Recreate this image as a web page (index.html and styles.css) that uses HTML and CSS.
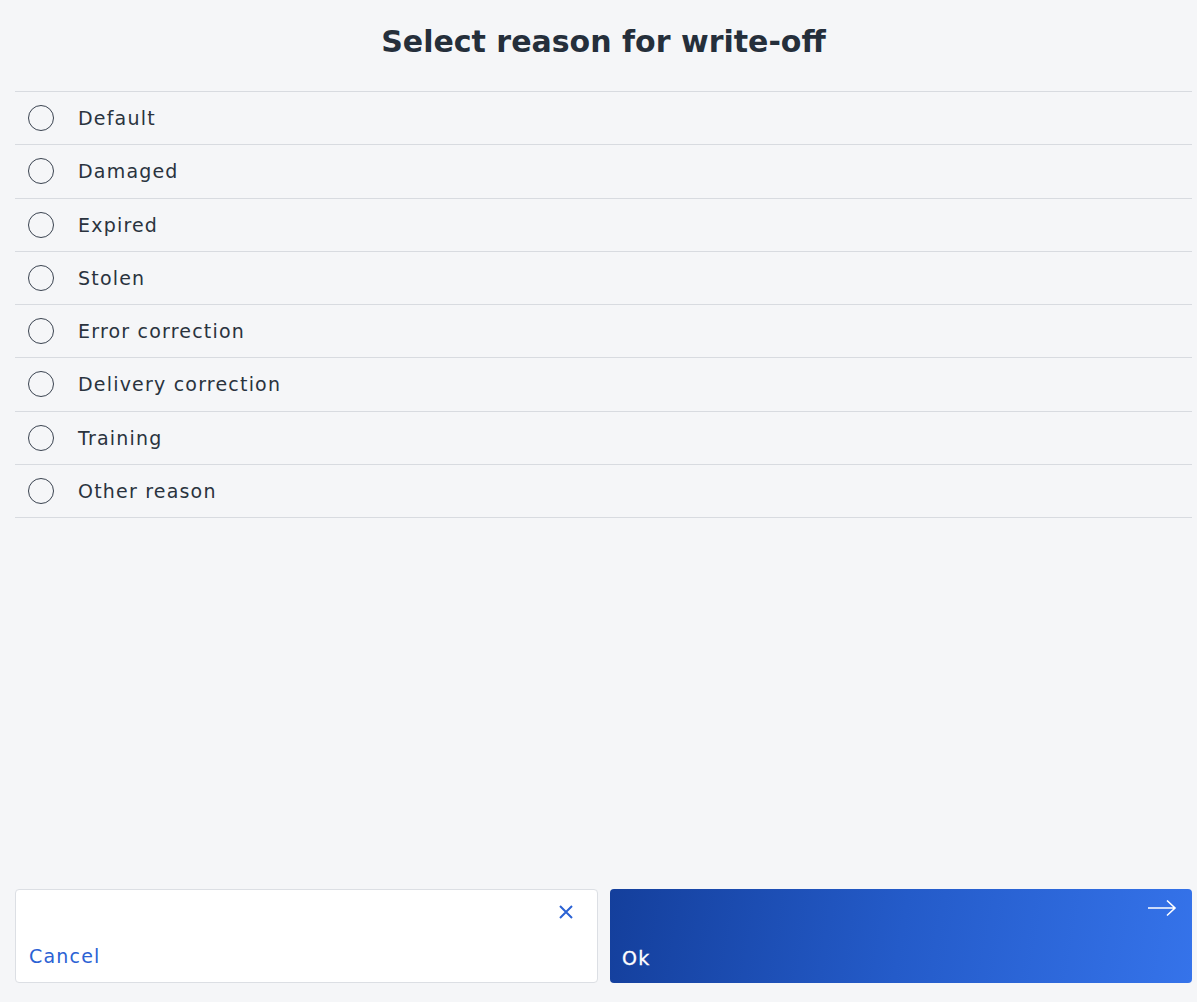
FILE: index.html
```html
<!DOCTYPE html>
<html>
<head>
<meta charset="utf-8">
<link rel="stylesheet" href="styles.css">
</head>
<body>
<div class="page">
  <h1 class="title">Select reason for write-off</h1>
  <ul class="list">
    <li class="row"><span class="radio"></span><span class="label">Default</span></li>
    <li class="row"><span class="radio"></span><span class="label">Damaged</span></li>
    <li class="row"><span class="radio"></span><span class="label">Expired</span></li>
    <li class="row"><span class="radio"></span><span class="label">Stolen</span></li>
    <li class="row"><span class="radio"></span><span class="label">Error correction</span></li>
    <li class="row"><span class="radio"></span><span class="label">Delivery correction</span></li>
    <li class="row"><span class="radio"></span><span class="label">Training</span></li>
    <li class="row"><span class="radio"></span><span class="label">Other reason</span></li>
  </ul>
  <div class="actions">
    <button class="btn btn-cancel">
      <svg class="icon icon-x" width="16" height="16" viewBox="0 0 16 16"><path d="M2 2L14 14M14 2L2 14" stroke="#2b62d4" stroke-width="2" fill="none"/></svg>
      <span class="btn-label">Cancel</span>
    </button>
    <button class="btn btn-ok">
      <svg class="icon icon-arrow" width="30" height="18" viewBox="0 0 30 18"><path d="M1 9H28M20 1.5L28 9L20 16.5" stroke="#ffffff" stroke-width="1.6" fill="none"/></svg>
      <span class="btn-label">Ok</span>
    </button>
  </div>
</div>
</body>
</html>
```
FILE: styles.css
```css
html, body {
  margin: 0;
  padding: 0;
  background: #f5f6f8;
}
body {
  font-family: "DejaVu Sans", "Noto Sans", sans-serif;
  color: #262f3a;
}
.page {
  height: 1002px;
  box-sizing: border-box;
  padding: 0 5px 19px 15px;
  display: flex;
  flex-direction: column;
}
.title {
  margin: 0;
  height: 92px;
  box-sizing: border-box;
  padding-top: 24px;
  text-align: center;
  font-size: 30px;
  font-weight: bold;
  color: #252f3b;
  border-bottom: 1px solid #d8dbe0;
}
.list {
  list-style: none;
  margin: 0;
  padding: 0;
  flex: 1;
}
.row {
  height: 52.25px;
  border-bottom: 1px solid #d8dbe0;
  display: flex;
  align-items: center;
  padding-left: 13px;
}
.radio {
  width: 24px;
  height: 24px;
  border: 1px solid #3a4350;
  border-radius: 50%;
  box-sizing: content-box;
  flex: none;
}
.label {
  margin-left: 24px;
  font-size: 19px;
  letter-spacing: 1.2px;
  color: #2a333e;
}
.actions {
  display: flex;
  gap: 12px;
  height: 94px;
}
.btn {
  min-width: 0;
  position: relative;
  border-radius: 4px;
  font-family: inherit;
  text-align: left;
  padding: 0;
  margin: 0;
  cursor: pointer;
  box-sizing: border-box;
}
.btn-cancel {
  flex: 0 0 583px;
  background: #ffffff;
  border: 1px solid #dcdfe4;
}
.btn-ok {
  flex: 1 1 0;
  border: none;
  background: linear-gradient(100deg, #143f9c 0%, #245bc9 50%, #3573ea 100%);
}
.icon {
  position: absolute;
}
.icon-x {
  top: 14px;
  right: 23px;
}
.icon-arrow {
  top: 10px;
  right: 15px;
}
.btn-label {
  position: absolute;
  left: 13px;
  bottom: 15px;
  font-size: 19px;
  letter-spacing: 1.2px;
}
.btn-cancel .btn-label {
  color: #2b62d4;
}
.btn-ok .btn-label {
  left: 12px;
  bottom: 14px;
  color: #ffffff;
  font-weight: 500;
  -webkit-text-stroke: 0.3px #ffffff;
}
```
